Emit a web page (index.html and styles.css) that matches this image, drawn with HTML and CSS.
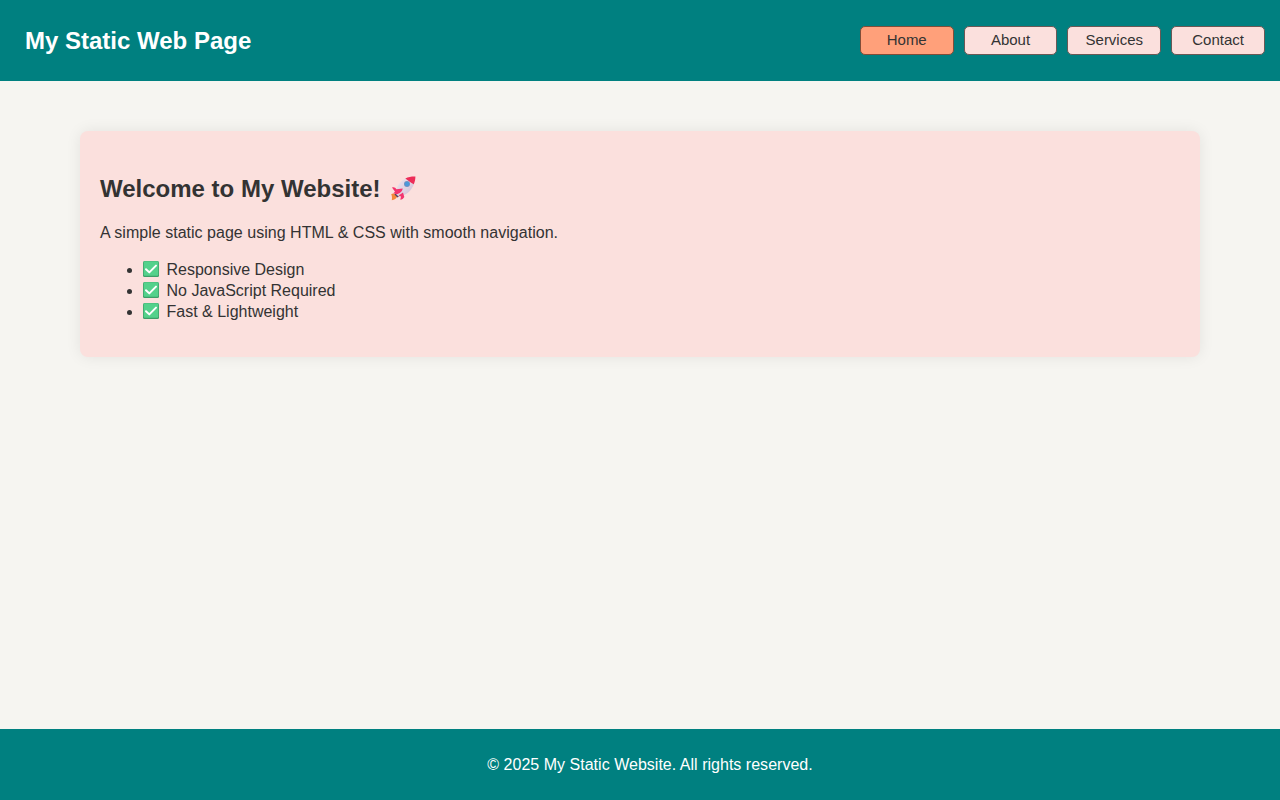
FILE: index.html
```html
<!DOCTYPE html>
<html lang="en">
<head>
<meta charset="utf-8">
<title>My Static Web Page</title>
<link rel="stylesheet" href="styles.css">
</head>
<body>
<svg class="defs" aria-hidden="true">
  <defs>
    <linearGradient id="hull" x1="0" y1="0" x2="1" y2="1">
      <stop offset="0" stop-color="#eee4ed"/>
      <stop offset=".55" stop-color="#dfd2e2"/>
      <stop offset="1" stop-color="#c8b5cf"/>
    </linearGradient>
    <symbol id="check" viewBox="0 0 16 16">
      <rect width="16" height="16" rx="1.5" fill="#3d9e68"/>
      <rect x=".7" y=".3" width="14.600" height="14.500" rx="1" fill="#54d18b"/>
      <path d="M3 8.200 6.300 11.400 13 4.600" fill="none" stroke="#fff" stroke-width="2" stroke-linecap="round" stroke-linejoin="round"/>
    </symbol>
  </defs>
</svg>
<header class="header">
  <h1 class="title">My Static Web Page</h1>
  <nav class="nav">
    <a class="link active">Home</a>
    <a class="link">About</a>
    <a class="link">Services</a>
    <a class="link">Contact</a>
  </nav>
</header>
<main class="main">
  <section class="card">
    <h2 class="heading">Welcome to My Website!
      <svg class="rocket" viewBox="0 0 26 26" role="img" aria-label="rocket">
        <path d="M1.200 18.300C3 17 6 17.500 7.300 20.300 6.500 22.700 4.500 24 1.800 24.200 2.200 22 2 20 1.200 18.300Z" fill="#f4893b"/>
        <path d="M4.500 18.500 7.500 21.500 9.500 20 6.500 17Z" fill="#533f64"/>
        <path d="M6 18C6 10.500 10 4.500 18 1.500L24.200 7.500C21.500 15 16 19.500 8.500 20.500Z" fill="url(#hull)"/>
        <path d="M15.300 2.500C18.500.9 21.500.4 25.400.5 25.400 3.700 24.800 6 23.800 8.200 20.500 6.700 19 5.200 15.300 2.500Z" fill="#ed2d58"/>
        <path d="M2 11.500C3.500 10.700 5.500 11.200 6.500 13.200L12.700 12.500C12.500 15.500 9.500 17.800 6.600 18.200L3.300 17.300 5 15.700Z" fill="#f3346e"/>
        <path d="M8.500 19.500 13 16.500 14.300 21C13.500 22.700 12 23.500 10.300 23.700L11 20.500Z" fill="#f3346e"/>
        <circle cx="17" cy="8" r="3" fill="#7890bd"/>
        <circle cx="17" cy="8" r="2.300" fill="#4b98d9"/>
      </svg>
    </h2>
    <p class="intro">A simple static page using HTML &amp; CSS with smooth navigation.</p>
    <ul class="features">
      <li><svg class="check" role="img" aria-label="done"><use href="#check"/></svg>Responsive Design</li>
      <li><svg class="check" role="img" aria-label="done"><use href="#check"/></svg>No JavaScript Required</li>
      <li><svg class="check" role="img" aria-label="done"><use href="#check"/></svg>Fast &amp; Lightweight</li>
    </ul>
  </section>
</main>
<footer class="footer">© 2025 My Static Website. All rights reserved.</footer>
</body>
</html>
```
FILE: styles.css
```css
* { box-sizing: border-box; }
body {
  margin: 0;
  min-height: 100vh;
  display: flex;
  flex-direction: column;
  background: #f6f5f1;
  color: #333;
  font-family: "Liberation Sans", Arial, sans-serif;
  font-size: 16px;
}
.defs { position: absolute; width: 0; height: 0; }
.header {
  height: 81px;
  padding: 0 15px 0 25px;
  display: flex;
  align-items: center;
  justify-content: space-between;
  background: #008080;
}
.title { margin: 0; font-size: 24px; color: #fff; }
.nav { display: flex; gap: 10px; }
.link {
  width: 93.8px;
  height: 29px;
  border: 1px solid #6b5855;
  border-radius: 5px;
  background: #fbe0dd;
  font-size: 15px;
  line-height: 25px;
  text-align: center;
}
.active { background: #ffa07a; border-color: #804d38; }
.main { flex: 1; padding: 50px 80px; }
.card {
  height: 226px;
  padding: 20px;
  border-radius: 8px;
  background: #fbe0dd;
  box-shadow: 0 0 15px rgba(0, 0, 0, 0.08);
}
.heading { margin: 24px 0 20px; height: 28px; font-size: 24px; line-height: 28px; }
.rocket { width: 26px; height: 26px; margin-left: 3px; vertical-align: -4.5px; }
.intro { margin: -1px 0 16px; line-height: 21px; letter-spacing: 0.025px; }
.features { margin: 0; padding-left: 43px; line-height: 21px; }
.check { width: 16px; height: 16px; margin-right: 7.5px; vertical-align: -2px; }
.footer {
  height: 71px;
  padding-left: 20px;
  background: #008080;
  color: #fff;
  line-height: 71px;
  letter-spacing: 0.02px;
  text-align: center;
}
```
